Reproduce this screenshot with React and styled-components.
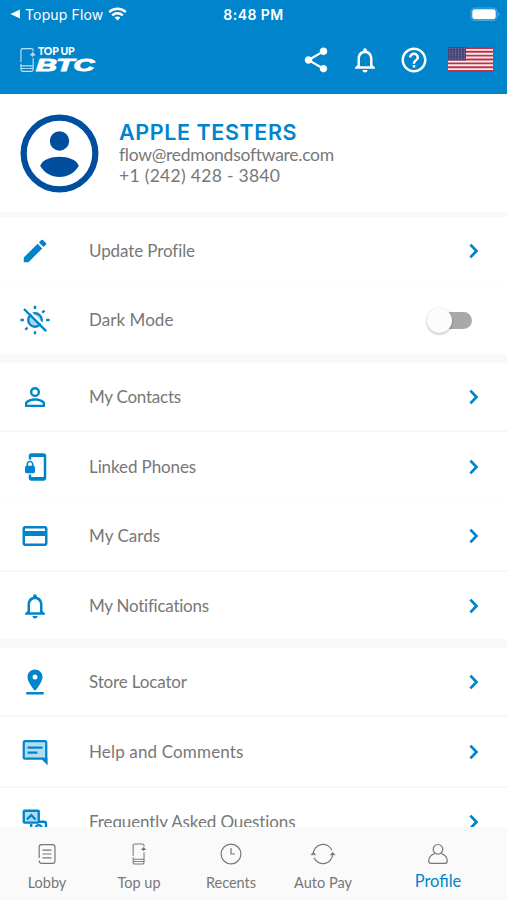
import styled, { createGlobalStyle, css } from "styled-components";
import {
  MdCreditCard,
  MdEdit,
  MdHelpOutline,
  MdNotificationsNone,
  MdPersonOutline,
  MdPhonelinkLock,
  MdPinDrop,
  MdShare,
} from "react-icons/md";

const BLUE = "#0084cc";

const tabs = [
  { name: "Lobby", icon: <LobbyIcon /> },
  { name: "Top up", icon: <PhoneIcon /> },
  { name: "Recents", icon: <ClockIcon /> },
  { name: "Auto Pay", icon: <AutoPayIcon /> },
  { name: "Profile", icon: <ProfileIcon />, active: true },
];

export default function App() {
  return (
    <Screen>
      <GlobalStyle />
      <Header>
        <StatusBar>
          <BackApp>
            <BackArrow />
            Topup Flow
            <WifiIcon />
          </BackApp>
          <Time>8:48 PM</Time>
          <Battery>
            <BatteryIcon />
          </Battery>
        </StatusBar>
        <Toolbar>
          <Logo>
            <LogoPhone viewBox="0 0 17 26">
              <PhoneShape />
            </LogoPhone>
            <LogoText>
              <LogoTop>TOP UP</LogoTop>
              <LogoName>BTC</LogoName>
            </LogoText>
          </Logo>
          <Actions>
            <MdShare size={30} />
            <MdNotificationsNone size={30} />
            <MdHelpOutline size={30} />
            <UsFlag />
          </Actions>
        </Toolbar>
      </Header>

      <Content>
        <Account>
          <Avatar />
          <div>
            <Name>APPLE TESTERS</Name>
            <Detail $spacing="-0.27px">flow@redmondsoftware.com</Detail>
            <Detail $spacing="0.3px">+1 (242) 428 - 3840</Detail>
          </div>
        </Account>

        <Divider $height={5} />
        <Row $height={69} $light>
          <MdEdit size={30} />
          <Label $spacing="-0.1px">Update Profile</Label>
          <Chevron />
        </Row>
        <Row $height={68} $last>
          <LightOffIcon />
          <Label>Dark Mode</Label>
          <Toggle><Thumb /></Toggle>
        </Row>

        <Divider $height={9} />
        <Row $height={69}>
          <MdPersonOutline size={30} />
          <Label $spacing="-0.25px">My Contacts</Label>
          <Chevron />
        </Row>
        <Row $height={70} $light>
          <MdPhonelinkLock size={30} />
          <Label $spacing="-0.1px">Linked Phones</Label>
          <Chevron />
        </Row>
        <Row $height={70}>
          <MdCreditCard size={30} />
          <Label>My Cards</Label>
          <Chevron />
        </Row>
        <Row $height={67} $last>
          <MdNotificationsNone size={30} />
          <Label $spacing="-0.25px">My Notifications</Label>
          <Chevron />
        </Row>

        <Divider $height={9} />
        <Row $height={69}>
          <MdPinDrop size={30} />
          <Label $spacing="-0.15px">Store Locator</Label>
          <Chevron />
        </Row>
        <Row $height={71}>
          <CommentIcon />
          <Label $spacing="0.15px">Help and Comments</Label>
          <Chevron />
        </Row>
        <Row $height={68} $last>
          <FaqIcon />
          <Label $spacing="-0.1px">Frequently Asked Questions</Label>
          <Chevron />
        </Row>
      </Content>

      <TabBar>
        {tabs.map((tab) => (
          <Tab key={tab.name}>
            {tab.icon}
            <TabName $active={tab.active}>{tab.name}</TabName>
          </Tab>
        ))}
      </TabBar>
    </Screen>
  );
}

function BackArrow() {
  return (
    <svg width="10" height="10" viewBox="0 0 10 10">
      <path d="M10 .6v8.8L.5 5z" fill="#fff" />
    </svg>
  );
}

function WifiIcon() {
  return (
    <svg width="19" height="14" viewBox="0 0 19 14" fill="none" stroke="#fff" strokeWidth="2.4">
      <path d="M1.2 5.1c4.7-4.5 11.9-4.5 16.6 0M4.2 8.3c3-2.8 7.6-2.8 10.6 0" />
      <path d="M6.6 10.6c1.8-1.4 4-1.4 5.8 0L9.5 13.6z" fill="#fff" stroke="none" />
    </svg>
  );
}

function BatteryIcon() {
  return (
    <svg width="30" height="15" viewBox="0 0 30 15">
      <rect x="1" y="1" width="26" height="12.5" rx="4" fill="none" stroke="#4ba8dc" strokeWidth="1.1" />
      <rect x="2.3" y="2.3" width="23.4" height="9.9" rx="2.6" fill="#fff" />
      <path d="M28.3 5.2v4.2q1.4-.6 1.4-2.1t-1.4-2.1" fill="#4ba8dc" />
    </svg>
  );
}

function PhoneShape() {
  return (
    <g fill="none" stroke="currentColor" strokeWidth="1.25">
      <path d="M14 4V3q0-2-2-2H3Q1 1 1 3v12M1 17v6q0 2 2 2h9q2 0 2-2V11M1 19.3h13M1 22h4.5M9.5 22H14M6 22h3" />
      <path d="M13.5 9.5V5.7M11.6 7.6l1.9-2.1 1.9 2.1z" fill="currentColor" />
    </g>
  );
}

function UsFlag() {
  const stars = [];
  for (let y = 0; y < 5; y++) {
    for (let x = 0; x < 6; x++) stars.push(<circle key={`${x}-${y}`} cx={1.8 + x * 2.9} cy={1.5 + y * 2.4} r=".5" />);
  }
  return (
    <svg width="45" height="25" viewBox="0 0 45 24.7" preserveAspectRatio="none">
      <rect width="45" height="24.7" fill="#f6eef0" />
      <path d="M0 .95h45M0 4.75h45M0 8.55h45M0 12.35h45M0 16.15h45M0 19.95h45M0 23.75h45" stroke="#bb3347" strokeWidth="1.9" />
      <rect width="18" height="13.3" fill="#464678" />
      <g fill="#9496b8">{stars}</g>
    </svg>
  );
}

function Avatar() {
  return (
    <svg width="79" height="79" viewBox="0 0 80 80" fill="#004f9f">
      <circle cx="40" cy="40" r="36.3" fill="none" stroke="#004f9f" strokeWidth="6.3" />
      <circle cx="40" cy="27.3" r="9.8" />
      <path d="M20.4 52.3C23.5 46.2 31 43.4 40 43.4s16.5 2.8 19.6 8.9C55.5 59.5 48.5 63.7 40 63.7s-15.5-4.2-19.6-11.4z" />
    </svg>
  );
}

function Chevron() {
  return (
    <ChevronIcon viewBox="0 0 10 16">
      <path d="M1.4 1.6 7.5 8l-6.1 6.4" fill="none" stroke={BLUE} strokeWidth="2.7" />
    </ChevronIcon>
  );
}

function LightOffIcon() {
  return (
    <svg width="30" height="30" viewBox="0 0 24 24" fill="none" stroke={BLUE} strokeWidth="1.9">
      <circle cx="12" cy="12" r="5.4" fill="#a9d8f0" />
      <path d="M12 .6v2.5M12 20.9v2.5M.3 12h2.8M20.9 12h2.8M17.8 6.2l1.8-1.8M4.2 19.8 6 18" />
      <path d="M4.6 1.8 22.4 19.6" stroke="#fff" strokeWidth="1.5" />
      <path d="M3.2 3.2l17.7 17.7" />
    </svg>
  );
}

function CommentIcon() {
  return (
    <svg width="30" height="30" viewBox="0 0 24 24" stroke={BLUE} strokeWidth="1.8">
      <path d="M4 3.3h16q1 0 1 1v16l-3-3H4q-1 0-1-1v-12q0-1 1-1z" fill="#b2dcf2" />
      <path d="M6 8.4h12M6 12.4h8" fill="none" />
      <path d="M17.5 16.5h4.4v6z" fill={BLUE} stroke="none" />
    </svg>
  );
}

function FaqIcon() {
  return (
    <svg width="30" height="30" viewBox="0 0 24 24" stroke={BLUE} strokeWidth="1.9">
      <rect x="3" y="3" width="12" height="9.5" rx=".7" fill="#b2dcf2" />
      <path d="M5.5 10 9 6.6l3.5 3.4" fill="none" />
      <path d="M9 20v-6.5M15 11.8h4q1.8 0 1.8 1.8V21" fill="none" />
      <circle cx="15" cy="17" r="2.5" fill="#fff" />
    </svg>
  );
}

function LobbyIcon() {
  return (
    <TabIcon viewBox="0 0 26 26">
      <path d="M5.2 17V6q0-2.3 2.3-2.3h11Q21 3.7 21 6v14q0 2.3-2.3 2.3H7.5q-2.3 0-2.3-2.8" />
      <path d="M8.5 9.2h9M8.5 13h9M8.5 16.8h9" />
    </TabIcon>
  );
}

function PhoneIcon() {
  return (
    <TabIcon viewBox="-7.5 -2.5 31 31">
      <PhoneShape />
    </TabIcon>
  );
}

function ClockIcon() {
  return (
    <TabIcon viewBox="0 0 26 26">
      <circle cx="13" cy="13" r="9.9" />
      <path d="M13 7v6h3.8" />
    </TabIcon>
  );
}

function AutoPayIcon() {
  return (
    <TabIcon viewBox="0 0 26 26">
      <path d="M3.3 13a9.7 9.7 0 0 1 18.6-3.7M22.7 13a9.7 9.7 0 0 1-18.6 3.7" />
      <path d="M.8 13.8 3.3 11.3l2.5 2.5zM20.2 13.8l2.5-2.5 2.5 2.5z" fill="currentColor" strokeWidth=".5" />
    </TabIcon>
  );
}

function ProfileIcon() {
  return (
    <TabIcon viewBox="0 0 26 26">
      <circle cx="13" cy="8.3" r="4.8" />
      <path d="M10 12.5c-3.5 1.1-6.3 4-6.3 7.6q0 2.3 2.3 2.3h14q2.3 0 2.3-2.3c0-3.6-2.8-6.5-6.3-7.6" />
    </TabIcon>
  );
}

const GlobalStyle = createGlobalStyle`
* {
box-sizing: border-box;
}
body {
margin: 0;
overflow: hidden;
font-family: Lato, sans-serif;
}
svg {
display: block;
flex-shrink: 0;
}
`

const Screen = styled.div`
width: 100%;
height: 100vh;
display: flex;
flex-direction: column;
background: #fff;
`

const Header = styled.div`
height: 94px;
flex-shrink: 0;
background: ${BLUE};
color: #fff;
`

const StatusBar = styled.div`
height: 28px;
display: grid;
grid-template-columns: 1fr auto 1fr;
align-items: center;
padding: 0 7px 0 10px;
font-family: Inter, sans-serif;
font-size: 14px;
`

const BackApp = styled.div`
display: flex;
align-items: center;
gap: 5px;
letter-spacing: 0.15px;
`

const Time = styled.div`
font-weight: 600;
font-size: 14px;
letter-spacing: 0.45px;
margin-right: 3px;
`

const Battery = styled.div`
display: flex;
justify-content: flex-end;
`

const Toolbar = styled.div`
height: 63px;
display: flex;
align-items: center;
justify-content: space-between;
padding: 0 14px 0 20px;
`

const Logo = styled.div`
display: flex;
align-items: center;
`

const LogoPhone = styled.svg`
width: 16px;
height: 26px;
opacity: 0.75;
`

const LogoText = styled.div`
height: 26px;
`

const LogoTop = styled.div`
font-size: 10.5px;
font-weight: 900;
line-height: 9px;
margin-left: 2px;
letter-spacing: -0.25px;
`

const LogoName = styled.div`
width: 38px;
font-family: "Liberation Sans", sans-serif;
font-size: 17px;
font-weight: 700;
font-style: italic;
line-height: 19px;
letter-spacing: -0.3px;
-webkit-text-stroke: 1px #fff;
transform: scaleX(1.7);
transform-origin: left;
`

const Actions = styled.div`
display: flex;
align-items: center;
gap: 19px;
`

const Content = styled.div`
flex: 1;
min-height: 0;
overflow: hidden;
`

const Account = styled.div`
height: 118px;
display: flex;
align-items: center;
gap: 20px;
padding: 0 20px;
`

const Name = styled.div`
color: ${BLUE};
font-family: Inter, sans-serif;
font-size: 21.5px;
font-weight: 600;
line-height: 25px;
letter-spacing: 0.6px;
`

const Detail = styled.div`
color: #777;
font-size: 17.5px;
line-height: 20.5px;
letter-spacing: ${({ $spacing }) => $spacing};
`

const Divider = styled.div`
height: ${({ $height }) => $height}px;
background: #f9f9f9;
`

const Row = styled.div`
height: ${({ $height }) => $height}px;
display: flex;
align-items: center;
padding: 0 28px 0 20px;
color: ${BLUE};
${({ $last, $light }) => !$last && css`
border-bottom: ${$light ? "1px solid #fcfcfc" : "2px solid #f7f7f7"};
`}
`

const Label = styled.div`
flex: 1;
margin-left: 39px;
color: #777;
font-size: 17px;
line-height: 22px;
letter-spacing: ${({ $spacing = "0.05px" }) => $spacing};
`

const ChevronIcon = styled.svg`
width: 10px;
height: 16px;
`

const Toggle = styled.div`
width: 32px;
height: 17px;
margin-right: 7px;
display: flex;
align-items: center;
border-radius: 9px;
background: #a9a9a9;
`

const Thumb = styled.div`
width: 25px;
height: 25px;
flex-shrink: 0;
margin-left: -13px;
border-radius: 50%;
background: #fcfcfc;
box-shadow: 0 1px 3px rgba(0, 0, 0, 0.3);
`

const TabBar = styled.div`
height: 73px;
flex-shrink: 0;
display: grid;
grid-template-columns: repeat(4, 92px) 1fr;
padding-left: 1px;
background: #fafafa;
`

const Tab = styled.div`
display: flex;
flex-direction: column;
align-items: center;
padding-top: 14px;
color: #777;
`

const TabIcon = styled.svg`
width: 26px;
height: 26px;
fill: none;
stroke: currentColor;
stroke-width: 1.2;
`

const TabName = styled.div`
margin-top: ${({ $active }) => ($active ? 4 : 6)}px;
color: ${({ $active }) => ($active ? BLUE : "#777")};
font-size: ${({ $active }) => ($active ? 16.5 : 14.5)}px;
line-height: 20px;
`
